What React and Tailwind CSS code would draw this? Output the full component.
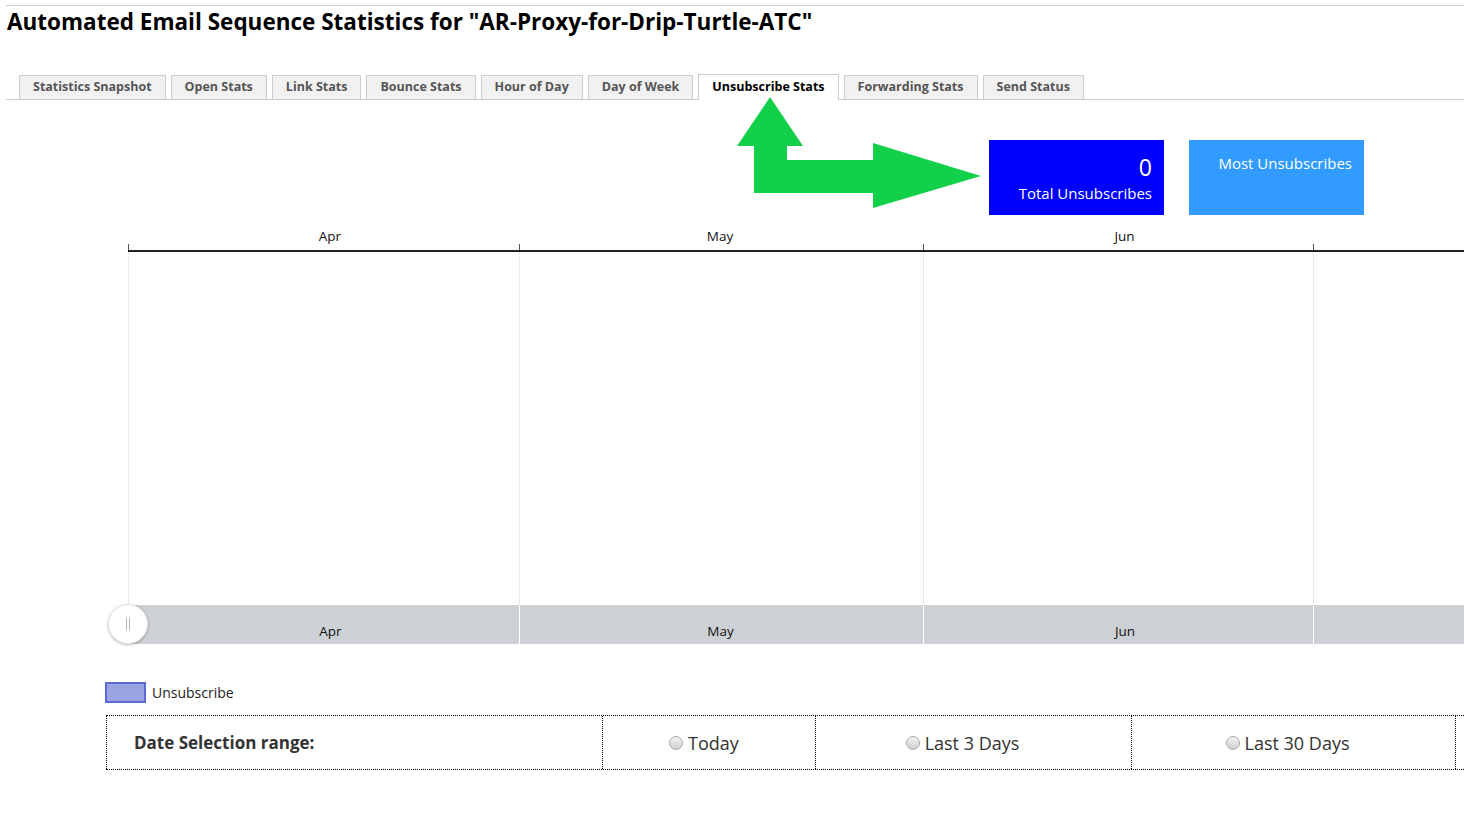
import React from "react";

const tabs = [
  "Statistics Snapshot",
  "Open Stats",
  "Link Stats",
  "Bounce Stats",
  "Hour of Day",
  "Day of Week",
  "Unsubscribe Stats",
  "Forwarding Stats",
  "Send Status",
];

const months = [
  { label: "Apr", w: "w-[391px]", pad: "pl-[13px]" },
  { label: "May", w: "w-[404px]", pad: "pr-[2px]" },
  { label: "Jun", w: "w-[390px]", pad: "pl-[13px]" },
  { label: "", w: "w-[300px]", pad: "" },
];

function Radio({ label }) {
  return (
    <label className="flex items-center justify-center gap-[5px] text-[18px] text-[#333]">
      <span className="inline-block h-[14px] w-[14px] rounded-full border border-[#aaa] bg-gradient-to-b from-[#f4f4f4] to-[#cfcfcf]" />
      <span className="leading-none">{label}</span>
    </label>
  );
}

export default function App() {
  return (
    <div
      className="relative h-[815px] w-[1464px] overflow-hidden bg-white"
      style={{ fontFamily: '"Open Sans", "Liberation Sans", sans-serif' }}
    >
      {/* header */}
      <div className="ml-[6px] mt-[5px] border-t border-[#ccc]">
        <h1 className="ml-[1px] mt-px text-[22.5px] font-bold leading-[30px] text-black">
          Automated Email Sequence Statistics for "AR-Proxy-for-Drip-Turtle-ATC"
        </h1>

        {/* tabs */}
        <div className="mt-[37px] flex items-end gap-[5px] border-b border-[#ccc] pl-[13px]">
          {tabs.map((t) =>
            t === "Unsubscribe Stats" ? (
              <div
                key={t}
                className="-mb-px flex h-[26px] items-center border border-b-0 border-[#ccc] bg-white px-[13px] text-[12.5px] font-bold text-black"
              >
                {t}
              </div>
            ) : (
              <div
                key={t}
                className="flex h-[24px] items-center border border-b-0 border-[#ccc] bg-[#f1f1f1] px-[13px] text-[12.5px] font-bold text-[#555]"
              >
                {t}
              </div>
            )
          )}
        </div>
      </div>

      {/* stat boxes */}
      <div className="mt-[40px] flex justify-end gap-[25px] pr-[100px]">
        <div className="flex h-[75px] w-[175px] flex-col items-end bg-[#0000ff] px-[12px] pt-[12px] text-white">
          <div className="text-[23px] leading-[30px]">0</div>
          <div className="text-[15px] leading-[22px]">Total Unsubscribes</div>
        </div>
        <div className="flex h-[75px] w-[175px] flex-col items-end bg-[#319bff] px-[12px] pt-[12px] text-white">
          <div className="text-[15px] leading-[22px]">Most Unsubscribes</div>
        </div>
      </div>

      {/* timeline chart */}
      <div className="relative ml-[128px] mt-[14px] flex text-[13.5px] text-[#111]">
        {months.map((m, i) => (
          <div key={i} className={`flex shrink-0 flex-col ${m.w}`}>
            <div className={`h-[15px] text-center leading-[15px] ${m.pad}`}>{m.label}</div>
            <div className="h-[6px] border-l border-[#555]" />
            <div className="h-[2px] bg-[#222]" />
            <div className="h-[353px] border-l border-dotted border-[#d6d6d6]" />
            <div className={`flex h-[39px] items-end justify-center border-l border-white bg-[#cdd1d5] pb-[5px] leading-[16px] ${m.pad}`}>
              {m.label}
            </div>
          </div>
        ))}
        <div className="absolute left-[-20px] top-[375px] flex h-[40px] w-[40px] items-center justify-center gap-[2px] rounded-full border border-[#e3e3e3] bg-white shadow-[0_1px_3px_rgba(0,0,0,0.25)]">
          <span className="h-[12px] w-px bg-[#b5b5b5]" />
          <span className="h-[12px] w-px bg-[#b5b5b5]" />
        </div>
      </div>

      {/* legend */}
      <div className="ml-[105px] mt-[38px] flex items-center gap-[6px]">
        <span className="inline-block h-[21px] w-[41px] border-2 border-[#5a6ad6] bg-[#9ba3e3]" />
        <span className="text-[14px] text-[#222]">Unsubscribe</span>
      </div>

      {/* date selection */}
      <div className="ml-[106px] mt-[12px] flex h-[55px] w-[1400px] border-y border-dotted border-black">
        <div className="flex w-[496px] shrink-0 items-center border-l border-dotted border-black pl-[27px] text-[17px] font-bold text-[#333]">
          Date Selection range:
        </div>
        <div className="flex w-[213px] shrink-0 items-center justify-center border-l border-dotted border-black pr-[10px]">
          <Radio label="Today" />
        </div>
        <div className="flex w-[316px] shrink-0 items-center justify-center border-l border-dotted border-black pr-[22px]">
          <Radio label="Last 3 Days" />
        </div>
        <div className="flex w-[325px] shrink-0 items-center justify-center border-x border-dotted border-black pr-[12px]">
          <Radio label="Last 30 Days" />
        </div>
      </div>

      {/* annotation arrow */}
      <svg
        className="absolute left-[730px] top-[90px]"
        width="260"
        height="125"
        viewBox="0 0 260 125"
      >
        <polygon
          fill="#12d04a"
          points="40,7 73,56 57,56 57,70 143,70 143,53 251,86 143,118 143,103 24,103 24,56 7,56"
        />
      </svg>
    </div>
  );
}
